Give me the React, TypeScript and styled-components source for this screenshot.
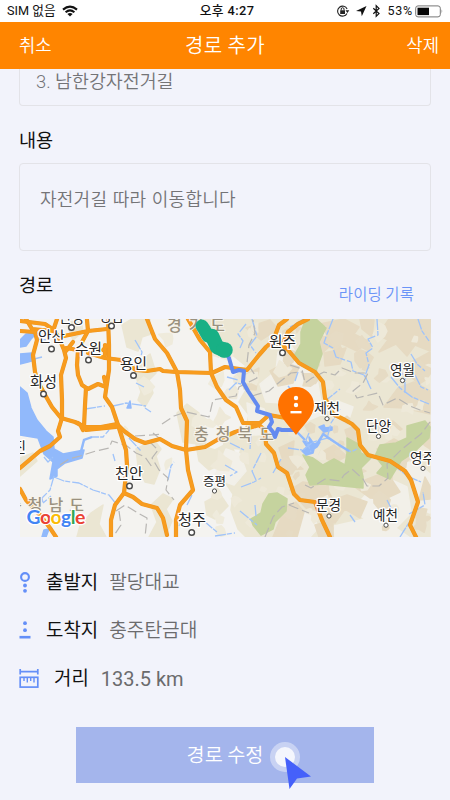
import React from 'react';
import styled, { createGlobalStyle } from 'styled-components';

const GlobalStyle = createGlobalStyle`
  * { box-sizing: border-box; }
  html, body { margin: 0; padding: 0; }
  body { background: #f2f3fb; font-family: Roboto, "Noto Sans CJK KR", sans-serif; }
`;

const Screen = styled.div`
  width: 450px;
  height: 800px;
  overflow: hidden;
  display: flex;
  flex-direction: column;
  background: #f2f3fb;
`;

const StatusBar = styled.div`
  flex: none;
  height: 22px;
  display: grid;
  grid-template-columns: 1fr auto 1fr;
  align-items: center;
  padding: 0 6px 0 7px;
  background: #fff;
  color: #111;
  font-size: 12px;
  line-height: 22px;
  white-space: nowrap;
`;

const StatusGroup = styled.div<{ $end?: boolean }>`
  display: flex;
  align-items: center;
  justify-content: ${(p) => (p.$end ? 'flex-end' : 'flex-start')};
  svg { display: block; flex: none; }
`;

const Carrier = styled.span`
  font-size: 12.7px;
  margin-right: 6px;
`;

const Clock = styled.div`
  font-size: 12.8px;
  font-weight: 500;
  letter-spacing: 0.4px;
  padding-left: 3px;
`;

const Percent = styled.span`
  font-size: 12.5px;
  letter-spacing: 0.8px;
  margin: 0 2px 0 6px;
`;

const NavBar = styled.div`
  flex: none;
  height: 47px;
  display: grid;
  grid-template-columns: 1fr auto 1fr;
  align-items: center;
  padding: 0 11px 2px 19px;
  background: #ff8500;
  color: #fff;
  line-height: 45px;
  font-family: "Noto Sans CJK KR", sans-serif;
  font-weight: 350;
`;

const NavAction = styled.span<{ $end?: boolean }>`
  font-size: 17.8px;
  text-align: ${(p) => (p.$end ? 'right' : 'left')};
`;

const NavTitle = styled.span`
  font-size: 20px;
  letter-spacing: 0.4px;
  margin: 0 8px 0 0;
`;

const Content = styled.main`
  flex: 1;
  display: flex;
  flex-direction: column;
  padding: 0 19px;
  overflow: hidden;
`;

const TitleField = styled.div`
  flex: none;
  height: 37px;
  border: 1px solid #e3e3e8;
  border-top: 0;
  border-radius: 0 0 4px 4px;
  padding: 0 16px;
  line-height: 25px;
  font-size: 18.4px;
  font-weight: 350;
  color: #747477;
`;

const SectionTitle = styled.h2`
  margin: 0;
  font-size: 18.6px;
  line-height: 26px;
  font-weight: 400;
  color: #111;
`;

const BodyField = styled.div`
  flex: none;
  height: 88px;
  border: 1px solid #e3e3e8;
  border-radius: 4px;
  padding: 21px 20px;
  font-family: "Noto Sans CJK KR", sans-serif;
  font-size: 18px;
  line-height: 26px;
  font-weight: 350;
  letter-spacing: 0.25px;
  word-spacing: 1.2px;
  color: #747477;
`;

const Section = styled.section`
  flex: none;
  height: 57px;
  display: flex;
  justify-content: space-between;
  padding-top: 22px;
`;

const RouteHeader = styled.div`
  flex: none;
  height: 68px;
  display: flex;
  justify-content: space-between;
  padding: 22px 17px 0 0;
`;

const RecordLink = styled.span`
  margin-top: 7px;
  line-height: 26px;
  font-family: "Noto Sans CJK KR", sans-serif;
  font-size: 15.4px;
  font-weight: 350;
  letter-spacing: 0.15px;
  color: #6b94f7;
`;

const MapFrame = styled.div`
  flex: none;
  height: 218px;
  padding-left: 1px;
  svg { display: block; }
`;

const Rows = styled.div`
  flex: none;
  display: grid;
  grid-template-rows: repeat(3, 48px);
  padding-top: 22px;
`;

const InfoRow = styled.div<{ $gap: number }>`
  display: flex;
  align-items: center;
  font-size: 18.9px;
  line-height: 28px;
  svg { display: block; flex: none; margin-right: ${(p) => p.$gap}px; }
`;

const InfoLabel = styled.span`
  color: #111;
  font-weight: 400;
`;

const InfoValue = styled.span<{ $latin?: boolean }>`
  margin-left: ${(p) => (p.$latin ? 12 : 11)}px;
  color: #6b6b6d;
  font-weight: ${(p) => (p.$latin ? 400 : 350)};
  font-size: ${(p) => (p.$latin ? 20 : 19.2)}px;
`;

const SubmitButton = styled.div`
  flex: none;
  position: relative;
  align-self: center;
  width: 298px;
  height: 56px;
  margin-top: 24px;
  background: #a4b5ec;
  color: #fff;
  text-align: center;
  font-family: "Noto Sans CJK KR", sans-serif;
  font-size: 19.7px;
  line-height: 53px;
  font-weight: 350;
`;

const Pointer = styled.svg`
  position: absolute;
  left: 190px;
  top: 12px;
  overflow: visible;
`;

const KR = '"Noto Sans CJK KR", sans-serif';

const ROADS = [
  'M20 331 L35 332 L37 340 L33 355 L35 372 L38 382 L44 393 L52 407 L61 418 L75 422 L85 427 L101 427 L117 424 L124 431 L135 439 L145 443 L160 439 L172 446 L186 450 L205 447 L217 440 L235 432 L259 425 L265 430 L266 444 L274 453 L278 467 L287 473 L294 494 L300 500 L315 502 L322 520 L330 537',
  'M20 321 L45 324 L54 330 L59 338 L64 350 L66 358 L61 375 L62 400 L62 418 L58 431 L60 437 L50 446 L40 451 L20 468',
  'M26 319 L32 329 L53 331 L57 319',
  'M64 336 L88 331 L107 329 M87 320 L88 331 L82 342',
  'M66 348 L78 350 L77 365 L78 375 L82 385 L88 389 L98 384 L106 387',
  'M86 388 L85 405 L84 427',
  'M108 319 L109 345 L109 370 L106 390 L105 397 L112 407 L118 425 L126 450 L127 465 L124 493 L115 505 L111 520 L111 537',
  'M88 353 L105 358 L121 360 L136 370 L147 371 L160 369 L163 371 L176 372 L212 373 L225 367 L247 370 L259 355 L266 347 L273 341 L279 325 L287 319',
  'M147 319 L155 339 L167 353 L177 372 L180 390 L181 408 L187 421 L186 450 L188 470 L193 490 L180 505 L176 520 L176 537',
  'M188 319 L200 340 L210 352 L211 373 L217 387 L226 400 L236 407 L243 423 L260 423 L269 415 L286 418',
  'M271 342 L282 345 L288 350 L299 363 L315 372 L323 382 L325 398 L333 414 L345 420 L352 424 L358 430 L360 445 L368 455 L390 461 L405 471 L411 480 L418 502 L410 525 L416 537',
  'M124 493 L133 497 L142 504 L157 508 L163 518 L167 535',
  'M20 489 L26 500 L40 515 L50 528 L56 537',
  'M78 423 L86 430 L116 427 M81 426 L83 430',
  'M105 345 L105 355 M104 377 L106 386 M108 345 L103 350 M73 342 L66 351',
  'M283 343 L288 332 L298 324 L308 319',
];

const WATER = [
  'M20 340 L26 334 L37 333 L31 339 L26 346 L20 347 Z',
  'M20 354 L32 353 L35 360 L28 362 L20 364 Z',
  'M20 387 L27 393 L31 408 L37 420 L46 431 L53 437 L54 449 L63 454 L84 450 L82 458 L65 463 L57 469 L57 476 L50 479 L53 462 L44 454 L38 438 L20 435 Z',
  'M44 530 L49 529 L46 537 L42 537 Z',
  'M127 408 L130 401 L131 408 Z',
  'M303 441 L310 443 L309 437 L314 444 L320 442 L317 447 L314 449 L313 453 L306 455 L302 451 L307 447 Z',
  'M319 427 L324 425 L325 428 L332 427 L332 430 L324 432 Z',
];

const STREAMS = [
  'M35 339 L47 340 M34 359 L42 357',
  'M44 457 L48 462 L53 457',
  'M54 476 L50 490 L42 498 L43 503 L51 496',
  'M54 477 L64 481 L79 483 L93 490 L109 495 L117 505',
  'M81 454 L84 440 L92 437 L103 437 L109 430',
  'M85 409 L105 406 M113 406 L126 403 L146 406',
  'M136 383 L144 387 M145 408 L151 412',
  'M135 340 L142 352 L139 365 M149 319 L151 334',
  'M129 438 L141 451 M115 461 L113 454',
  'M168 480 L171 466 L174 462 M187 505 L192 495 M179 526 L185 515',
  'M229 390 L236 383 L241 384 M227 377 L238 380 M240 348 L243 341 L238 334 L246 324',
  'M252 319 L257 336 L250 345 L256 353 M304 319 L290 327',
  'M333 319 L327 334 L324 343 L333 348 L336 357 L351 362 L353 371 L364 375 L368 382',
  'M377 319 L378 335 L368 339 L373 348 L366 353 L369 365 L365 376 L371 389',
  'M418 319 L422 331 L429 341 M411 354 L417 364 L425 371',
  'M324 402 L340 389 M295 381 L298 372 M288 386 L294 393',
  'M391 377 L400 388 L412 397 L429 404 M405 393 L405 378 L395 363',
  'M415 375 L421 387 L428 390 M340 409 L331 423 L327 439',
  'M303 450 L313 442 L327 438 L340 445 L351 452 L357 449',
  'M309 433 L306 440 L311 452 M288 448 L302 450',
  'M225 465 L237 472 L230 476 M241 487 L254 482 L261 478',
  'M261 453 L252 471 L256 480 M240 511 L257 525 M255 505 L256 516',
  'M273 473 L281 459 M215 536 L235 533 M204 521 L218 533',
  'M393 464 L407 476 L421 482 M409 514 L425 505 L423 492 M400 537 L410 521',
  'M387 500 L393 512 M350 515 L355 522',
  'M230 443 L244 450 M251 433 L250 449',
];

const BORDERS = [
  'M60 465 L69 459 L80 456 L96 451 L109 448 L112 441 L127 446 L136 453 L145 457 L152 467',
  'M135 436 L151 435 L163 434 M149 441 L158 450 L152 458 L159 470 L168 478 L166 490 L174 500',
  'M116 511 L125 505 L138 513 L147 518 L145 537 M119 511 L121 525 L115 534',
  'M162 424 L174 416 L186 412 L209 417 L213 400 L236 396 L239 387 L257 378 L247 363 L249 345 L255 333 L253 320',
  'M252 396 L269 391 L276 385 L291 373 L302 372',
  'M290 365 L302 369 L305 383 L312 378 L324 372 L335 375 L342 368 L355 373 L368 373 L363 383 L353 391 L357 398 L378 393 L383 405 L397 398 L410 406 L420 410 L430 413',
  'M305 485 L311 488 L325 479 L340 481 L344 475 L352 469 L363 479 L367 486 L379 486 L388 478 L387 464 L401 450 L421 434 L430 422',
  'M265 537 L273 517 L282 507 L294 503 M289 505 L309 513',
  'M153 433 L165 443',
];

const BEIGE = [
  'M122 325 L132 319 L150 319 L151 334 L142 337 L138 351 L127 347 Z',
  'M133 367 L150 354 L156 373 L149 380 L153 393 L145 407 L138 400 L141 392 Z',
  'M192 319 L430 319 L430 537 L246 537 L238 529 L231 510 L233 494 L225 482 L236 466 L241 449 L223 448 L226 434 L245 432 L249 415 L239 402 L246 390 L234 377 L246 366 L225 349 L209 345 L198 334 Z',
  'M136 449 L154 440 L161 449 L156 456 L160 469 L154 484 L145 482 L138 466 Z',
  'M177 413 L187 404 L199 413 L193 425 L207 434 L205 445 L183 442 Z',
  'M91 513 L103 505 L99 524 L106 537 L77 537 L80 526 Z',
  'M151 505 L163 494 L173 499 L166 509 L172 521 L165 537 L149 537 L157 522 Z',
  'M196 444 L215 450 L230 442 L240 465 L232 478 L221 464 L209 470 L199 461 Z',
  'M205 502 L220 494 L228 506 L215 519 L207 515 Z',
  'M20 458 L33 453 L37 461 L20 476 Z',
  'M66 323 L81 320 L83 332 L73 340 Z',
];

const PALE = [
  'M278 352 L290 344 L304 365 L317 379 L323 414 L302 423 L283 403 L266 402 L260 384 L276 371 Z',
  'M247 403 L264 409 L273 434 L253 435 L249 421 Z',
  'M372 488 L394 481 L407 487 L411 513 L396 528 L409 537 L335 537 L334 526 L365 519 L352 510 Z',
  'M399 463 L416 462 L430 474 L430 513 L418 508 L408 474 Z',
  'M290 518 L308 511 L319 527 L310 537 L279 537 Z',
  'M226 449 L240 454 L246 471 L234 485 L214 478 Z',
  'M340 402 L353 407 L348 422 L333 417 Z',
];

const TAN = [
  'M315 325 L344 319 L359 327 L354 334 L368 341 L357 351 L338 342 L344 353 L329 347 L321 354 Z',
  'M389 319 L430 319 L430 351 L415 345 L407 356 L396 344 L379 352 L388 340 L378 335 Z',
  'M360 319 L374 320 L372 337 L362 329 Z',
  'M406 365 L430 352 L430 377 L419 384 L411 377 Z',
  'M398 388 L414 382 L430 391 L430 414 L404 408 L384 407 Z',
  'M324 353 L346 348 L340 364 L325 366 Z',
  'M270 371 L285 363 L299 367 L293 383 L278 386 Z',
  'M246 328 L270 320 L278 329 L261 340 Z',
  'M290 490 L303 482 L326 486 L333 500 L347 495 L367 502 L360 518 L345 509 L335 523 L317 518 L306 508 Z',
  'M352 485 L378 475 L392 480 L400 492 L385 499 L370 498 Z',
  'M377 449 L394 439 L405 445 L395 459 Z',
  'M279 448 L294 441 L292 460 L303 469 L286 470 Z',
  'M282 515 L293 499 L304 512 L297 537 L273 537 Z',
  'M243 376 L259 368 L256 390 L244 389 Z',
  'M345 430 L355 426 L363 448 L351 449 Z',
  'M393 421 L402 429 L391 435 L379 430 Z',
  'M334 445 L347 456 L334 463 L319 454 Z',
  'M417 433 L430 422 L430 455 L413 461 Z',
  'M425 477 L430 486 L430 499 L419 500 Z',
  'M315 525 L333 520 L333 537 L319 537 Z',
];

const GREEN = [
  'M301 332 L305 321 L316 319 L326 328 L319 342 L322 354 L316 371 L305 366 L294 356 L301 344 Z',
  'M303 455 L313 458 L323 465 L334 459 L345 465 L347 453 L347 438 L358 444 L361 453 L371 458 L361 468 L363 477 L363 488 L342 486 L323 484 L310 485 L306 475 L310 467 Z',
  'M263 504 L269 494 L277 493 L287 499 L286 511 L275 522 L273 529 L261 535 L253 525 L251 519 L261 513 Z',
  'M375 456 L380 445 L396 443 L407 438 L407 426 L425 421 L430 427 L429 438 L413 453 L401 461 L390 479 L377 473 L383 466 Z',
];

// Small jagged relief patches scattered over the highlands, from a fixed seed.
function relief(seed: number, count: number, x0: number, x1: number): string[] {
  let s = seed;
  const rand = () => {
    s = (s * 16807) % 2147483647;
    return s / 2147483647;
  };
  return Array.from({ length: count }, () => {
    const cx = x0 + rand() * (x1 - x0);
    const cy = 321 + rand() * 214;
    const size = 3 + rand() * 7;
    const points = Array.from({ length: 7 }, (_, i) => {
      const r = size * (0.35 + rand() * 0.9);
      const a = (i / 7) * Math.PI * 2;
      return `${(cx + Math.cos(a) * r).toFixed(1)} ${(cy + Math.sin(a) * r).toFixed(1)}`;
    });
    return `M${points.join(' L')} Z`;
  });
}

const RELIEF_LIGHT = relief(731, 55, 215, 430);
const RELIEF_TAN = relief(4211, 45, 285, 430);
const RELIEF_WEST = relief(977, 12, 125, 235);

type City = { name: string; x: number; y: number; w: number; dot?: [number, number]; size?: number };

const CITIES: City[] = [
  { name: '안산', x: 38, y: 342, w: 27, dot: [51.5, 349] },
  { name: '안성', x: 59, y: 323, w: 25, dot: [71.5, 327.5] },
  { name: '성남', x: 99, y: 321, w: 25, dot: [111.5, 326] },
  { name: '수원', x: 75, y: 353.5, w: 27, dot: [88.5, 360] },
  { name: '용인', x: 120, y: 369, w: 27, dot: [133.5, 375.5] },
  { name: '화성', x: 30, y: 387, w: 27, dot: [43.5, 394] },
  { name: '원주', x: 269, y: 347, w: 27, dot: [282.5, 352.8] },
  { name: '영월', x: 390, y: 375, w: 25, dot: [402.5, 380.5], size: 13.5 },
  { name: '제천', x: 314, y: 413, w: 26, dot: [327, 418.7], size: 13.5 },
  { name: '단양', x: 366, y: 430.5, w: 25, dot: [378.5, 436.4], size: 13.5 },
  { name: '영주', x: 410, y: 463, w: 25, dot: [423, 468.4], size: 13.5 },
  { name: '천안', x: 115, y: 479, w: 28, dot: [129.5, 486] },
  { name: '증평', x: 203, y: 486, w: 23, dot: [214.5, 491], size: 12.5 },
  { name: '청주', x: 178, y: 525, w: 28, dot: [191.7, 532.5] },
  { name: '문경', x: 316, y: 510, w: 25, dot: [329, 516], size: 13.5 },
  { name: '예천', x: 373, y: 520, w: 25, dot: [386, 525.2], size: 13.5 },
  { name: '진', x: 13, y: 452, w: 13, size: 14 },
];

const PROVINCES = [
  { name: '경기도', x: 167, y: 331, w: 58 },
  { name: '충청북도', x: 194, y: 440, w: 80 },
  { name: '충청남도', x: 7, y: 511, w: 77 },
];

const LOGO: [string, string][] = [
  ['G', '#4285f4'],
  ['o', '#ea4335'],
  ['o', '#fbbc05'],
  ['g', '#4285f4'],
  ['l', '#34a853'],
  ['e', '#ea4335'],
];

function Shapes({ list, fill }: { list: string[]; fill: string }) {
  return (
    <g fill={fill} stroke={fill} strokeWidth="1.5" strokeLinejoin="round">
      {list.map((d) => <path key={d} d={d} />)}
    </g>
  );
}

function RouteMap() {
  return (
    <svg width="411" height="218" viewBox="20 319 411 218">
      <rect x="20" y="319" width="411" height="218" fill="#f4f3f0" />
      <Shapes list={BEIGE} fill="#ebe6d3" />
      <Shapes list={RELIEF_WEST} fill="#efebdc" />
      <Shapes list={PALE} fill="#f2f0e9" />
      <Shapes list={TAN} fill="#e6dac2" />
      <Shapes list={RELIEF_LIGHT} fill="#eee9d9" />
      <Shapes list={RELIEF_TAN} fill="#e6dbc4" />
      <Shapes list={GREEN} fill="#c5d39e" />
      <Shapes list={WATER} fill="#91b9fb" />
      <g fill="none" stroke="#9fc3fa" strokeWidth="1.3" strokeLinejoin="round" strokeDasharray="11 1 5 2">
        {STREAMS.map((d) => <path key={d} d={d} />)}
      </g>
      <path d="M80 455 L84 440 L92 437 M305 440 L297 432 M323 434 L339 445 L349 451 M315 447 L324 433" fill="none" stroke="#91b9fb" strokeWidth="2.4" />
      <g fill="none" stroke="#b8b6b3" strokeWidth="1.2" strokeLinejoin="round" strokeDasharray="10 4">
        {BORDERS.map((d) => <path key={d} d={d} />)}
      </g>
      <g fill="none" stroke="#ee9620" strokeWidth="4.2" strokeLinejoin="round" strokeLinecap="round">
        {ROADS.map((d) => <path key={d} d={d} />)}
      </g>
      <g fill="none" stroke="#f89c1e" strokeWidth="3" strokeLinejoin="round" strokeLinecap="round">
        {ROADS.map((d) => <path key={d} d={d} />)}
      </g>
      {PROVINCES.map((p) => (
        <text key={p.name} x={p.x} y={p.y} textLength={p.w} fontFamily={KR} fontSize="16" fontWeight="500" fill="#9a917f" stroke="#f7f4eb" strokeWidth="2" paintOrder="stroke">{p.name}</text>
      ))}
      {CITIES.map((c) => (
        <g key={c.name + c.x}>
          <text x={c.x} y={c.y} textLength={c.w} lengthAdjust="spacingAndGlyphs" fontFamily={KR} fontSize={c.size ?? 15} fontWeight="400" fill="#262626" stroke="#fff" strokeWidth="2.5" strokeLinejoin="round" paintOrder="stroke">{c.name}</text>
          {c.dot && <circle cx={c.dot[0]} cy={c.dot[1]} r={c.size ? 2.1 : 2.8} fill="#fff" stroke="#4a4a4a" strokeWidth={c.size ? 1 : 1.4} />}
        </g>
      ))}
      <path d="M200 325 L224 350 L229 358 L233 372 L239 370 L244 371 L243 382 L248 391 L258 406 L257 411 L270 415 L272 422 L269 427 L273 432 L275 437 L278 429 L282 430 L296 430" fill="none" stroke="#638af0" strokeWidth="4" strokeLinejoin="round" />
      <g fill="none" stroke="#18b085" strokeLinecap="round" strokeLinejoin="round">
        <path d="M202 326 L204 329 L208 336" strokeWidth="13" />
        <path d="M212 336 L217 347 L224 350" strokeWidth="14.5" />
        <path d="M224 350 L225 350" strokeWidth="15.5" />
      </g>
      <path d="M296 435 C291 427 278 417 278 405 A18 18 0 0 1 314 405 C314 417 301 427 296 435 Z" fill="#ff7200" />
      <g fill="#fff">
        <circle cx="296" cy="398" r="2.2" />
        <circle cx="296" cy="405" r="2.2" />
        <rect x="290.5" y="411" width="11" height="2.4" />
      </g>
      <text x="26.5" y="524" textLength="59" fontFamily="Lato, sans-serif" fontSize="19.5" fontWeight="700" stroke="#fff" strokeWidth="2.5" strokeLinejoin="round" paintOrder="stroke">
        {LOGO.map(([ch, color], i) => <tspan key={i} fill={color}>{ch}</tspan>)}
      </text>
    </svg>
  );
}

function WifiIcon() {
  return (
    <svg width="16" height="12" viewBox="0 0 16 12" fill="none" stroke="#111" strokeWidth="2.1">
      <path d="M1 4.6 Q8 -1.3 15 4.6" />
      <path d="M3.6 7.3 Q8 3.6 12.4 7.3" />
      <path d="M8 11.5 L5.4 8.9 Q8 7 10.6 8.9 Z" fill="#111" stroke="none" />
    </svg>
  );
}

function StatusIcons() {
  return (
    <svg width="45" height="14" viewBox="0 0 45 14">
      <path d="M11 9.5 A5 5 0 1 1 11.1 5" fill="none" stroke="#222" strokeWidth="1.1" />
      <path d="M9.5 6.3 H13.3 L11.4 9 Z M4.2 6.2 H9 V10 H4.2 Z" fill="#222" />
      <path d="M5.2 6.3 V5 Q5.2 3.7 6.6 3.7 Q8 3.7 8 5 V6.3" fill="none" stroke="#222" />
      <path d="M30.5 2 L20 7 L25 7.6 L25.8 12.3 Z" fill="#111" />
      <path d="M37.3 4.2 L43 9.6 L40.2 12.3 V1.7 L43 4.4 L37.3 9.8" fill="none" stroke="#111" strokeWidth="1.2" />
    </svg>
  );
}

function BatteryIcon() {
  return (
    <svg width="29" height="13" viewBox="0 0 29 13">
      <rect x="0.7" y="0.9" width="24.6" height="11" rx="2.3" fill="#fff" stroke="#777" />
      <rect x="2.5" y="2.7" width="11.5" height="7.4" fill="#080808" />
      <path d="M26.6 4.3 Q28.2 6.4 26.6 8.5 Z" fill="#777" />
    </svg>
  );
}

function StartIcon() {
  return (
    <svg width="12" height="22" viewBox="0 0 12 22" fill="#648ff8">
      <circle cx="6" cy="5" r="3.9" fill="none" stroke="#648ff8" strokeWidth="2.1" />
      <circle cx="6" cy="13.5" r="1.9" />
      <circle cx="6" cy="18.8" r="1.9" />
    </svg>
  );
}

function EndIcon() {
  return (
    <svg width="12" height="20" viewBox="0 0 12 20" fill="#648ff8">
      <circle cx="6" cy="2.2" r="1.9" />
      <circle cx="6" cy="9.2" r="1.9" />
      <rect x="0.5" y="14.9" width="11" height="2.6" />
    </svg>
  );
}

function RulerIcon() {
  return (
    <svg width="20" height="21" viewBox="0 0 20 21" fill="none" stroke="#648ff8" strokeWidth="1.7">
      <path d="M1.2 0 V5.5 M18.8 0 V5.5 M1 2.7 H19" />
      <rect x="1.2" y="8.3" width="17.6" height="9.8" />
      <path d="M5 8.5 V12 M8.3 8.5 V13.5 M11.7 8.5 V12 M15 8.5 V13.5" strokeWidth="1.4" />
    </svg>
  );
}

export default function App() {
  return (
    <Screen>
      <GlobalStyle />
      <StatusBar>
        <StatusGroup><Carrier>SIM 없음</Carrier><WifiIcon /></StatusGroup>
        <Clock>오후 4:27</Clock>
        <StatusGroup $end><StatusIcons /><Percent>53%</Percent><BatteryIcon /></StatusGroup>
      </StatusBar>
      <NavBar>
        <NavAction>취소</NavAction>
        <NavTitle>경로 추가</NavTitle>
        <NavAction $end>삭제</NavAction>
      </NavBar>
      <Content>
        <TitleField>3. 남한강자전거길</TitleField>
        <Section><SectionTitle>내용</SectionTitle></Section>
        <BodyField>자전거길 따라 이동합니다</BodyField>
        <RouteHeader>
          <SectionTitle>경로</SectionTitle>
          <RecordLink>라이딩 기록</RecordLink>
        </RouteHeader>
        <MapFrame><RouteMap /></MapFrame>
        <Rows>
          <InfoRow $gap={15}><StartIcon /><InfoLabel>출발지</InfoLabel><InfoValue>팔당대교</InfoValue></InfoRow>
          <InfoRow $gap={15}><EndIcon /><InfoLabel>도착지</InfoLabel><InfoValue>충주탄금대</InfoValue></InfoRow>
          <InfoRow $gap={15}><RulerIcon /><InfoLabel>거리</InfoLabel><InfoValue $latin>133.5 km</InfoValue></InfoRow>
        </Rows>
        <SubmitButton>
          경로 수정
          <Pointer width="46" height="52" viewBox="0 0 46 52">
            <circle cx="19" cy="18" r="15" fill="#fff" opacity="0.4" />
            <circle cx="19" cy="18" r="10" fill="#fff" opacity="0.8" />
            <path d="M19 18 L45 37.5 L31 39.5 L23.5 50 Z" fill="#4560fa" />
          </Pointer>
        </SubmitButton>
      </Content>
    </Screen>
  );
}
